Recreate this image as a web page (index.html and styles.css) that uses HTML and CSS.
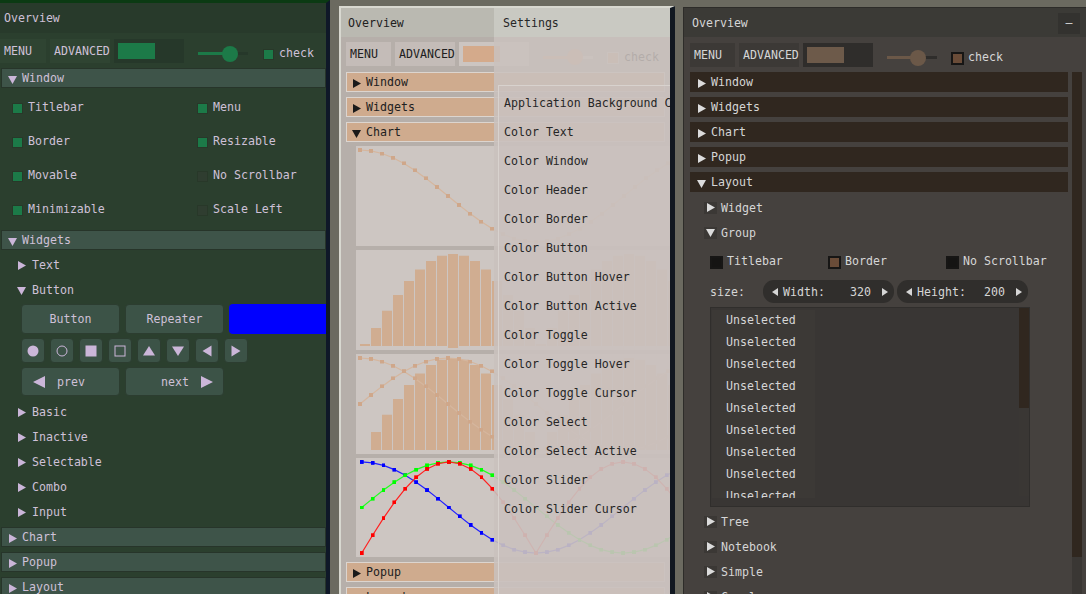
FILE: index.html
```html
<!DOCTYPE html>
<html>
<head>
<meta charset="utf-8">
<title>Nuklear overview</title>
<link rel="stylesheet" href="styles.css">
</head>
<body>
<svg class="defs" width="0" height="0" aria-hidden="true">
  <defs>
    <marker id="mt" markerUnits="userSpaceOnUse" markerWidth="4" markerHeight="4" refX="2" refY="2"><rect width="4" height="4" fill="#cfa78a"/></marker>
    <marker id="mr" markerUnits="userSpaceOnUse" markerWidth="4" markerHeight="4" refX="2" refY="2"><rect width="4" height="4" fill="#ff0000"/></marker>
    <marker id="mg" markerUnits="userSpaceOnUse" markerWidth="4" markerHeight="4" refX="2" refY="2"><rect width="4" height="4" fill="#00ff00"/></marker>
    <marker id="mb" markerUnits="userSpaceOnUse" markerWidth="4" markerHeight="4" refX="2" refY="2"><rect width="4" height="4" fill="#0000ff"/></marker>
  </defs>
</svg>
<div class="desk">

  <!-- Green themed window -->
  <div class="win green">
    <div class="title">Overview</div>
    <div class="menubar">
      <div class="mbtn m1">MENU</div>
      <div class="mbtn m2">ADVANCED</div>
      <div class="prog"><div class="fill"></div></div>
      <div class="slider"><div class="knob"></div></div>
      <div class="chk"><span class="box on"></span>check</div>
    </div>
    <div class="tab"><svg class="tri" viewBox="0 0 9 9"><path d="M0 1H9L4.5 9Z"/></svg>Window</div>
    <div class="flags">
      <div class="flag"><span class="box on"></span>Titlebar</div>
      <div class="flag"><span class="box on"></span>Menu</div>
      <div class="flag"><span class="box on"></span>Border</div>
      <div class="flag"><span class="box on"></span>Resizable</div>
      <div class="flag"><span class="box on"></span>Movable</div>
      <div class="flag"><span class="box"></span>No Scrollbar</div>
      <div class="flag"><span class="box on"></span>Minimizable</div>
      <div class="flag"><span class="box"></span>Scale Left</div>
    </div>
    <div class="tab mt4"><svg class="tri" viewBox="0 0 9 9"><path d="M0 1H9L4.5 9Z"/></svg>Widgets</div>
    <div class="nodes mt2">
      <div class="node"><svg class="tri" viewBox="0 0 9 9"><path d="M1 0L9 4.5L1 9Z"/></svg>Text</div>
      <div class="node"><svg class="tri" viewBox="0 0 9 9"><path d="M0 1H9L4.5 9Z"/></svg>Button</div>
    </div>
    <div class="btnrow">
      <div class="gbtn">Button</div>
      <div class="gbtn">Repeater</div>
      <div class="blue"></div>
    </div>
    <div class="symrow">
      <div class="sbtn"><svg viewBox="0 0 12 12"><circle cx="6" cy="6" r="5.5"/></svg></div>
      <div class="sbtn"><svg viewBox="0 0 12 12"><circle class="ol" cx="6" cy="6" r="5"/></svg></div>
      <div class="sbtn"><svg viewBox="0 0 12 12"><rect x="0.5" y="0.5" width="11" height="11"/></svg></div>
      <div class="sbtn"><svg viewBox="0 0 12 12"><rect class="ol" x="1" y="1" width="10" height="10"/></svg></div>
      <div class="sbtn"><svg viewBox="0 0 12 12"><path d="M0 10.5L6 1L12 10.5Z"/></svg></div>
      <div class="sbtn"><svg viewBox="0 0 12 12"><path d="M0 1.5H12L6 11Z"/></svg></div>
      <div class="sbtn"><svg viewBox="0 0 12 12"><path d="M1.5 6L10.5 0.5V11.5Z"/></svg></div>
      <div class="sbtn"><svg viewBox="0 0 12 12"><path d="M10.5 6L1.5 0.5V11.5Z"/></svg></div>
    </div>
    <div class="navrow">
      <div class="gbtn nav prev"><svg viewBox="0 0 12 12"><path d="M0 6L12 0V12Z"/></svg><span>prev</span></div>
      <div class="gbtn nav next"><span>next</span><svg viewBox="0 0 12 12"><path d="M12 6L0 0V12Z"/></svg></div>
    </div>
    <div class="nodes mt3">
      <div class="node"><svg class="tri" viewBox="0 0 9 9"><path d="M1 0L9 4.5L1 9Z"/></svg>Basic</div>
      <div class="node"><svg class="tri" viewBox="0 0 9 9"><path d="M1 0L9 4.5L1 9Z"/></svg>Inactive</div>
      <div class="node"><svg class="tri" viewBox="0 0 9 9"><path d="M1 0L9 4.5L1 9Z"/></svg>Selectable</div>
      <div class="node"><svg class="tri" viewBox="0 0 9 9"><path d="M1 0L9 4.5L1 9Z"/></svg>Combo</div>
      <div class="node"><svg class="tri" viewBox="0 0 9 9"><path d="M1 0L9 4.5L1 9Z"/></svg>Input</div>
    </div>
    <div class="tab mt3"><svg class="tri" viewBox="0 0 9 9"><path d="M1 0L9 4.5L1 9Z"/></svg>Chart</div>
    <div class="tab mt5"><svg class="tri" viewBox="0 0 9 9"><path d="M1 0L9 4.5L1 9Z"/></svg>Popup</div>
    <div class="tab mt5"><svg class="tri" viewBox="0 0 9 9"><path d="M1 0L9 4.5L1 9Z"/></svg>Layout</div>
  </div>

  <!-- Light themed window -->
  <div class="win light">
    <div class="title">Overview</div>
    <div class="menubar">
      <div class="mbtn m1">MENU</div>
      <div class="mbtn m2">ADVANCED</div>
      <div class="prog"><div class="fill"></div></div>
      <div class="slider"><div class="knob"></div></div>
      <div class="chk"><span class="box on"></span>check</div>
    </div>
    <div class="tab"><svg class="tri" viewBox="0 0 9 9"><path d="M1 0L9 4.5L1 9Z"/></svg>Window</div>
    <div class="tab mt5"><svg class="tri" viewBox="0 0 9 9"><path d="M1 0L9 4.5L1 9Z"/></svg>Widgets</div>
    <div class="tab mt5"><svg class="tri" viewBox="0 0 9 9"><path d="M0 1H9L4.5 9Z"/></svg>Chart</div>
    <div class="charts">
      <svg class="chart" viewBox="0 0 352 100">
        <polyline class="ln tan" points="4,4 15,4.9 26,7.5 37,11.75 48,17.47 59,24.44 70,32.4 81,41.03 92,50 103,58.97 114,67.6 125,75.56 136,82.53 147,88.25 158,92.5 169,95.1 180,96 191,95.1 202,92.5 213,88.25 224,82.53 235,75.56 246,67.6 257,58.97 268,50 279,41.03 290,32.4 301,24.44 312,17.47 323,11.75 334,7.5 345,4.9"/>
      </svg>
      <svg class="chart" viewBox="0 0 352 100">
        <path class="bars" d="M9 96V94M20 96V78.05M31 96V60.79M42 96V44.88M53 96V30.95M64 96V19.5M75 96V11M86 96V5.77M97 98V4M108 96V5.77M119 96V11M130 96V19.5M141 96V30.95M152 96V44.88M163 96V60.79M174 96V78.05M185 96V94M196 96V78.05M207 96V60.79M218 96V44.88M229 96V30.95M240 96V19.5M251 96V11M262 96V5.77M273 96V4M284 96V5.77M295 96V11M306 96V19.5M317 96V30.95M328 96V44.88M339 96V60.79M350 96V78.05"/>
      </svg>
      <svg class="chart" viewBox="0 0 352 100">
        <path class="bars" d="M20 96V78.05M31 96V60.79M42 96V44.88M53 96V30.95M64 96V19.5M75 96V11M86 96V5.77M97 96V4M108 96V5.77M119 96V11M130 96V19.5M141 96V30.95M152 96V44.88M163 96V60.79M174 96V78.05M196 96V78.05M207 96V60.79M218 96V44.88M229 96V30.95M240 96V19.5M251 96V11M262 96V5.77M273 96V4M284 96V5.77M295 96V11M306 96V19.5M317 96V30.95M328 96V44.88M339 96V60.79M350 96V78.05"/>
        <polyline class="ln tan" points="4,4 15,4.9 26,7.5 37,11.75 48,17.47 59,24.44 70,32.4 81,41.03 92,50 103,58.97 114,67.6 125,75.56 136,82.53 147,88.25 158,92.5 169,95.1 180,96 191,95.1 202,92.5 213,88.25 224,82.53 235,75.56 246,67.6 257,58.97 268,50 279,41.03 290,32.4 301,24.44 312,17.47 323,11.75 334,7.5 345,4.9"/>
        <polyline class="ln tan" points="4,50 15,41.03 26,32.4 37,24.44 48,17.47 59,11.75 70,7.5 81,4.9 92,4 103,4.9 114,7.5 125,11.75 136,17.47 147,24.44 158,32.4 169,41.03 180,50 191,58.97 202,67.6 213,75.56 224,82.53 235,88.25 246,92.5 257,95.1 268,96 279,95.1 290,92.5 301,88.25 312,82.53 323,75.56 334,67.6 345,58.97"/>
      </svg>
      <svg class="chart c4" viewBox="0 0 352 100">
        <polyline class="ln blu" points="4,4 15,4.9 26,7.5 37,11.75 48,17.47 59,24.44 70,32.4 81,41.03 92,50 103,58.97 114,67.6 125,75.56 136,82.53 147,88.25 158,92.5 169,95.1 180,96 191,95.1 202,92.5 213,88.25 224,82.53 235,75.56 246,67.6 257,58.97 268,50 279,41.03 290,32.4 301,24.44 312,17.47 323,11.75 334,7.5 345,4.9"/>
        <polyline class="ln grn" points="4,50 15,41.03 26,32.4 37,24.44 48,17.47 59,11.75 70,7.5 81,4.9 92,4 103,4.9 114,7.5 125,11.75 136,17.47 147,24.44 158,32.4 169,41.03 180,50 191,58.97 202,67.6 213,75.56 224,82.53 235,88.25 246,92.5 257,95.1 268,96 279,95.1 290,92.5 301,88.25 312,82.53 323,75.56 334,67.6 345,58.97"/>
        <polyline class="ln red" points="4,96 15,78.05 26,60.79 37,44.88 48,30.95 59,19.5 70,11 81,5.77 92,4 103,5.77 114,11 125,19.5 136,30.95 147,44.88 158,60.79 169,78.05 180,96 191,78.05 202,60.79 213,44.88 224,30.95 235,19.5 246,11 257,5.77 268,4 279,5.77 290,11 301,19.5 312,30.95 323,44.88 334,60.79 345,78.05"/>
      </svg>
    </div>
    <div class="tab mt5"><svg class="tri" viewBox="0 0 9 9"><path d="M1 0L9 4.5L1 9Z"/></svg>Popup</div>
    <div class="tab mt5"><svg class="tri" viewBox="0 0 9 9"><path d="M1 0L9 4.5L1 9Z"/></svg>Layout</div>
  </div>

  <!-- Settings popup over the light window -->
  <div class="win settings">
    <div class="title">Settings</div>
    <div class="sbody">
      <div class="sgroup">
        <div class="srow">Application Background Color</div>
        <div class="srow">Color Text</div>
        <div class="srow">Color Window</div>
        <div class="srow">Color Header</div>
        <div class="srow">Color Border</div>
        <div class="srow">Color Button</div>
        <div class="srow">Color Button Hover</div>
        <div class="srow">Color Button Active</div>
        <div class="srow">Color Toggle</div>
        <div class="srow">Color Toggle Hover</div>
        <div class="srow">Color Toggle Cursor</div>
        <div class="srow">Color Select</div>
        <div class="srow">Color Select Active</div>
        <div class="srow">Color Slider</div>
        <div class="srow">Color Slider Cursor</div>
      </div>
    </div>
  </div>

  <!-- Dark themed window -->
  <div class="win dark">
    <div class="title">Overview<div class="minbtn">–</div></div>
    <div class="menubar">
      <div class="mbtn m1">MENU</div>
      <div class="mbtn m2">ADVANCED</div>
      <div class="prog"><div class="fill"></div></div>
      <div class="slider"><div class="knob"></div></div>
      <div class="chk"><span class="box on"></span>check</div>
    </div>
    <div class="dbody">
      <div class="dcontent">
        <div class="tab"><svg class="tri" viewBox="0 0 9 9"><path d="M1 0L9 4.5L1 9Z"/></svg>Window</div>
        <div class="tab mt5"><svg class="tri" viewBox="0 0 9 9"><path d="M1 0L9 4.5L1 9Z"/></svg>Widgets</div>
        <div class="tab mt5"><svg class="tri" viewBox="0 0 9 9"><path d="M1 0L9 4.5L1 9Z"/></svg>Chart</div>
        <div class="tab mt5"><svg class="tri" viewBox="0 0 9 9"><path d="M1 0L9 4.5L1 9Z"/></svg>Popup</div>
        <div class="tab mt5"><svg class="tri" viewBox="0 0 9 9"><path d="M0 1H9L4.5 9Z"/></svg>Layout</div>
        <div class="nodes mt3">
          <div class="node"><span class="tb"><svg class="tri" viewBox="0 0 9 9"><path d="M1 0L9 4.5L1 9Z"/></svg></span>Widget</div>
          <div class="node"><span class="tb"><svg class="tri" viewBox="0 0 9 9"><path d="M0 1H9L4.5 9Z"/></svg></span>Group</div>
        </div>
        <div class="gflags">
          <div class="flag"><span class="box"></span>Titlebar</div>
          <div class="flag"><span class="box on"></span>Border</div>
          <div class="flag"><span class="box"></span>No Scrollbar</div>
        </div>
        <div class="sizerow">
          <span class="slabel">size:</span>
          <div class="pill"><svg class="arr" viewBox="0 0 6 8"><path d="M0 4L6 0V8Z"/></svg><span class="pl">Width:</span><span class="pv">320</span><svg class="arr r" viewBox="0 0 6 8"><path d="M6 4L0 0V8Z"/></svg></div>
          <div class="pill"><svg class="arr" viewBox="0 0 6 8"><path d="M0 4L6 0V8Z"/></svg><span class="pl">Height:</span><span class="pv">200</span><svg class="arr r" viewBox="0 0 6 8"><path d="M6 4L0 0V8Z"/></svg></div>
        </div>
        <div class="listbox">
          <div class="items">
            <div class="item">Unselected</div>
            <div class="item">Unselected</div>
            <div class="item">Unselected</div>
            <div class="item">Unselected</div>
            <div class="item">Unselected</div>
            <div class="item">Unselected</div>
            <div class="item">Unselected</div>
            <div class="item">Unselected</div>
            <div class="item">Unselected</div>
          </div>
          <div class="lscroll"><div class="lcur"></div><div class="ltrack"></div></div>
        </div>
        <div class="nodes mt2">
          <div class="node"><span class="tb"><svg class="tri" viewBox="0 0 9 9"><path d="M1 0L9 4.5L1 9Z"/></svg></span>Tree</div>
          <div class="node"><span class="tb"><svg class="tri" viewBox="0 0 9 9"><path d="M1 0L9 4.5L1 9Z"/></svg></span>Notebook</div>
          <div class="node"><span class="tb"><svg class="tri" viewBox="0 0 9 9"><path d="M1 0L9 4.5L1 9Z"/></svg></span>Simple</div>
          <div class="node"><span class="tb"><svg class="tri" viewBox="0 0 9 9"><path d="M1 0L9 4.5L1 9Z"/></svg></span>Complex</div>
        </div>
      </div>
      <div class="vscroll"><div class="vcur"></div></div>
    </div>
  </div>

</div>
</body>
</html>
```

FILE: styles.css
```css
* { box-sizing: border-box; margin: 0; padding: 0; }
html, body { width: 1086px; height: 594px; overflow: hidden; }
body {
  background: #6b6a60;
  font-family: "DejaVu Sans Mono", "Liberation Mono", monospace;
  font-size: 11.6px;
  line-height: 1;
}
.defs { position: absolute; width: 0; height: 0; }
.desk { position: relative; width: 1086px; height: 594px; }

.win {
  position: absolute;
  overflow: hidden;
  display: flex;
  flex-direction: column;
  white-space: nowrap;
}
.title { height: 29px; display: flex; align-items: center; flex: none; padding-top: 2px; }
.menubar { display: flex; align-items: flex-start; flex: none; }
.mbtn { height: 24px; display: flex; align-items: center; padding-left: 4px; padding-top: 2px; flex: none; }
.m1 { width: 45px; }
.m2 { width: 60px; margin-left: 4px; }
.prog { width: 70px; height: 24px; margin-left: 4px; padding: 4px; flex: none; }
.fill { width: 37px; height: 100%; }
.slider { position: relative; width: 50px; height: 3px; align-self: center; margin-left: 14px; flex: none; }
.knob { position: absolute; left: 24px; top: -6.5px; width: 16px; height: 16px; border-radius: 50%; }
.chk { display: flex; align-items: center; gap: 5px; align-self: center; margin-left: 14px; padding-top: 1px; }
.box { width: 12px; height: 12px; flex: none; }
.tab { height: 20px; display: flex; align-items: center; gap: 5px; flex: none; border: 1px solid; padding-top: 2px; }
.tri { width: 9px; height: 9px; flex: none; }
.nodes { flex: none; }
.node { height: 25px; display: flex; align-items: center; gap: 5px; padding-top: 2px; }
.flag { display: flex; align-items: center; gap: 5px; padding-top: 2px; }
.mt2 { margin-top: 2px; }
.mt3 { margin-top: 3px; }
.mt4 { margin-top: 4px; }
.mt5 { margin-top: 5px; }

/* ---------- green ---------- */
.green {
  left: 0; top: 0; width: 330px; height: 594px;
  background: #2b3f2e; color: #cfc1d8;
  border-top: 3px solid #0b3a13;
  border-right: 4px solid #0f1828;
}
.green .title { height: 30px; background: #283a2b; padding-left: 4px; }
.green .menubar { height: 35px; padding-top: 6px; }
.green .mbtn { background: #2f4432; }
.green .m1 { width: 46px; }
.green .prog { background: #26382a; }
.green .fill { background: #1c7a48; }
.green .slider { background: linear-gradient(to right, #1c7a48 32px, #26382a 32px); }
.green .knob { background: #1c7a48; }
.green .chk { margin-left: 15px; }
.green .box { width: 11px; height: 11px; background: #2f3d30; border: 1px solid #283829; }
.green .box.on { background: #1c7a48; }
.green .tab { margin-left: 1px; background: #3e5449; border-color: #27352a; padding-left: 6px; }
.green .tri { fill: #cbb6d9; }
.green .flags {
  display: grid; grid-template-columns: 185px 1fr; grid-auto-rows: 34px;
  padding-left: 12px; margin-top: 2px; flex: none;
}
.green .node { padding-left: 17px; gap: 6px; }
.btnrow { display: flex; gap: 5px; height: 30px; margin-top: 2px; padding-left: 21px; flex: none; }
.gbtn {
  width: 99px; height: 100%; flex: none;
  background: #3c5347; border: 1px solid #2c3d30; border-radius: 4px;
  display: flex; align-items: center; justify-content: center; padding-top: 2px;
}
.blue { width: 110px; height: 100%; background: #0000ff; border-radius: 4px 0 0 4px; flex: none; }
.symrow { display: flex; gap: 5px; height: 25px; margin-top: 4px; padding-left: 21px; flex: none; }
.sbtn {
  width: 24px; height: 25px; background: #3c5347; border: 1px solid #2c3d30; border-radius: 4px;
  display: flex; align-items: center; justify-content: center;
}
.sbtn svg { width: 12px; height: 12px; fill: #cbb6d9; }
.sbtn .ol { fill: none; stroke: #cbb6d9; stroke-width: 1; }
.navrow { display: flex; gap: 5px; height: 29px; margin-top: 4px; padding-left: 21px; flex: none; }
.nav svg { width: 12px; height: 12px; fill: #cbb6d9; flex: none; }
.nav { padding-top: 0; }
.nav span { padding-top: 2px; }
.prev { justify-content: flex-start; padding-left: 11px; gap: 12px; }
.next { justify-content: flex-end; padding-right: 10px; gap: 12px; }

/* ---------- light ---------- */
.light {
  left: 339px; top: 6px; width: 336px; height: 588px;
  background: #b6afaa; color: #202020;
  border-top: 2px solid #d8d8d0;
  border-left: 2px solid #d8d8d0;
  border-right: 5px solid #111821;
}
.light .title { background: #bab9b1; padding-left: 7px; }
.light .menubar { height: 35px; padding: 5px 0 0 5px; }
.light .mbtn { background: #c4bcb8; }
.light .prog { background: #ccc5c1; }
.light .fill { background: #d4aa8b; }
.light .slider { background: linear-gradient(to right, #d4aa8b 32px, #ccc5c1 32px); }
.light .knob { background: #d4aa8b; }
.light .box { background: #d2ab8e; border: 1px solid #ccc5c1; }
.light .tab { margin: 0 5px; background: #cfab8e; border-color: #dcd5cf; padding-left: 5px; }
.light .tab.mt5 { margin-top: 5px; }
.light .tri { fill: #1a1a1a; }
.charts { padding-left: 15px; flex: none; }
.chart { display: block; width: 352px; height: 100px; background: #cdc6c2; margin-top: 4px; }
.c4 { height: 99px; }
.ln { fill: none; stroke-width: 1.2; marker-start: url(#mt); marker-mid: url(#mt); marker-end: url(#mt); }
.tan { stroke: #d5b69e; }
.red { stroke: #ff2020; marker-start: url(#mr); marker-mid: url(#mr); marker-end: url(#mr); }
.grn { stroke: #20ff20; marker-start: url(#mg); marker-mid: url(#mg); marker-end: url(#mg); }
.blu { stroke: #2020ff; marker-start: url(#mb); marker-mid: url(#mb); marker-end: url(#mb); }
.bars { fill: none; stroke: #d0ad91; stroke-width: 10; }

/* ---------- settings popup ---------- */
.settings {
  left: 494px; top: 8px; width: 176px; height: 586px;
  color: #262626;
}
.settings .title { background: #c9c9c2; padding-left: 9px; }
.sbody { flex: 1; background: rgba(201, 193, 189, 0.87); padding: 48px 0 0 4px; }
.sgroup {
  width: 180px; height: 100%; border: 1px solid #d8d2ce; border-right: none; border-bottom: none;
  padding: 2px 0 0 5px; background: rgba(202, 193, 189, 0.4);
}
.srow { height: 29px; display: flex; align-items: center; padding-top: 2px; }

/* ---------- dark ---------- */
.dark {
  left: 683px; top: 7px; width: 403px; height: 587px;
  background: #45413e; color: #d6d6d6;
  border-top: 1px solid #2d2c29;
  border-left: 1px solid #2d2c29;
}
.dark .title { background: #3b3a36; padding-left: 8px; }
.minbtn {
  margin-left: auto; margin-right: 6px; width: 22px; height: 21px;
  background: #33322f; display: flex; align-items: center; justify-content: center;
}
.dark .menubar { height: 35px; padding: 6px 0 0 6px; }
.dark .mbtn { background: #3c3936; }
.dark .prog { background: #2f2d2b; }
.dark .fill { background: #6d5a4a; }
.dark .slider { background: linear-gradient(to right, #6b5848 31px, #2f2d2b 31px); }
.dark .knob { background: #6b5848; left: 23px; }
.dark .chk { margin-left: 14px; gap: 4px; }
.dark .box { width: 13px; height: 13px; background: #151413; border: 2px solid #171615; }
.dark .box.on { background: #6a4c38; }
.dbody { display: flex; flex: 1; padding-left: 6px; min-height: 0; }
.dcontent { width: 378px; flex: none; display: flex; flex-direction: column; }
.vscroll { width: 10px; margin-left: 4px; background: #3a3734; flex: none; }
.vcur { height: 485px; background: #30271f; }
.dark .tab { background: #30271f; border-color: #30271f; padding-left: 6px; }
.dark .tri { fill: #dcdcdc; }
.dark .node { padding-left: 14px; gap: 4px; }
.tb { width: 13px; height: 12px; background: #3b3835; display: flex; align-items: center; justify-content: center; flex: none; margin-top: -2px; }
.tb .tri { width: 9px; height: 9px; }
.gflags {
  display: grid; grid-template-columns: 118px 118px 1fr; height: 24px;
  margin-top: 4px; padding-left: 20px; flex: none;
}
.gflags .flag { gap: 4px; }
.sizerow { display: flex; align-items: center; height: 23px; margin-top: 7px; padding-left: 20px; flex: none; }
.slabel { width: 53px; padding-top: 2px; }
.pill {
  width: 131px; height: 23px; border-radius: 11px; background: #302e2c;
  display: flex; align-items: center; padding: 0 6px 0 9px; margin-right: 3px;
}
.pl, .pv { padding-top: 2px; }
.arr { width: 6px; height: 8px; fill: #d6d6d6; flex: none; }
.arr.r { margin-left: 11px; }
.pl { margin-left: 5px; }
.pv { margin-left: auto; }
.listbox {
  display: flex; align-items: flex-start; width: 320px; height: 200px; margin: 4px 0 0 20px; flex: none;
  background: #393634; border: 1px solid #302e2c; overflow: hidden;
}
.items { flex: 1; padding-top: 2px; height: 190px; overflow: hidden; }
.item { width: 103px; height: 22px; margin-left: 1px; padding-left: 14px; background: #3c3936; display: flex; align-items: center; }
.lscroll { width: 10px; height: 100%; display: flex; flex-direction: column; padding-bottom: 10px; }
.lcur { height: 100px; background: #30271f; }
.ltrack { flex: 1; background: #3a3734; }
```
